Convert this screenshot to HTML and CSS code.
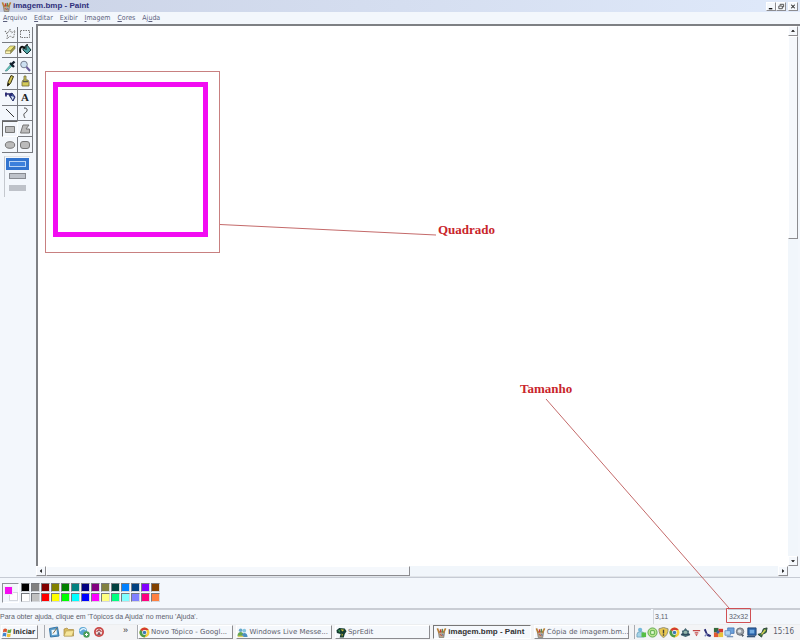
FILE: index.html
```html
<!DOCTYPE html>
<html lang="pt-BR">
<head>
<meta charset="utf-8">
<title>imagem.bmp - Paint</title>
<link rel="stylesheet" href="styles.css">
</head>
<body>
<svg class="defs" width="0" height="0" aria-hidden="true">
  <symbol id="paint" viewBox="0 0 12 12">
    <path d="M2.500 5h7l-1 6.500h-5z" fill="#b8ad96" stroke="#645c55" stroke-width=".6"/>
    <path d="M3.500 6.500L1.500 1.500M8 6.500l2.500-5" stroke="#b98035" stroke-width="1.800"/>
    <path d="M5 6V2.500" stroke="#c73d2d" stroke-width="1.800"/>
    <path d="M7 6V2" stroke="#5a8755" stroke-width="1.500"/>
    <path d="M4 8l3 1.500" stroke="#ba4136"/><path d="M7 7.500l1 2" stroke="#4d6da8"/>
  </symbol>
  <symbol id="chrome" viewBox="0 0 12 12">
    <circle cx="6" cy="6" r="5.400" fill="#f5cd3c"/>
    <path d="M6 6L1.300 3.300A5.400 5.400 0 0 1 10.700 3.300L6 3.500z" fill="#d43c30"/>
    <path d="M6 6L1.300 3.300A5.400 5.400 0 0 0 6 11.400L8 8z" fill="#4b9b4b"/>
    <circle cx="6" cy="6" r="2.600" fill="#fff"/><circle cx="6" cy="6" r="1.900" fill="#3d78b5"/>
  </symbol>
  <symbol id="people" viewBox="0 0 12 12">
    <circle cx="4" cy="3.500" r="2" fill="#66a7c9"/><path d="M.5 10c0-6 7-6 7 0z" fill="#65a651"/>
    <circle cx="8" cy="4" r="2" fill="#87c4df"/><path d="M5 11c0-6 6.500-6 6.500 0z" fill="#4b8fc0"/>
    <path d="M1 9.500h6v1.500H1z" fill="#d7cd5f"/>
  </symbol>
  <symbol id="spr" viewBox="0 0 12 12">
    <path d="M.5 3.500L3.500 1l6 .5 2 3-2 3-1 4H4l1-4-4-1z" fill="#143d31"/>
    <path d="M5 2.500l4 .5-2 2zM6 7l1.500 1-1 3" fill="#d6c13b"/><path d="M2 4l2-1 .5 3" fill="#3d9a56"/>
  </symbol>
</svg>

<header class="titlebar">
  <svg class="icon"><use href="#paint"/></svg>
  <h1>imagem.bmp - Paint</h1>
  <div class="winbtns">
    <button class="bevel" aria-label="Minimizar"><svg viewBox="0 0 9 8"><path d="M2 6.500h4" stroke="#111" stroke-width="1.500"/></svg></button>
    <button class="bevel" aria-label="Restaurar"><svg viewBox="0 0 9 8"><path d="M3.500 3V1.500h4v3H6M2 3.500h4v3H2z" fill="none" stroke="#444"/></svg></button>
    <button class="bevel last" aria-label="Fechar"><svg viewBox="0 0 9 8"><path d="M2.500 2l4 4m0-4l-4 4" stroke="#222" stroke-width="1.200"/></svg></button>
  </div>
</header>
<nav class="menu">
  <button><u>A</u>rquivo</button><button><u>E</u>ditar</button><button>E<u>x</u>ibir</button><button><u>I</u>magem</button><button><u>C</u>ores</button><button>Aj<u>u</u>da</button>
</nav>

<main class="work">
  <aside class="side">
    <div class="tools">
      <button aria-label="Seleção livre"><svg viewBox="0 0 14 14"><path d="M2 4l3 2 2-4 1.500 4L12 3.500 10.500 11 7 9l-3 3 .5-4z" fill="none" stroke="#777" stroke-dasharray="1.500 1"/></svg></button>
      <button aria-label="Selecionar"><svg viewBox="0 0 14 14"><path d="M2.500 3.500h9v7h-9z" fill="none" stroke="#777" stroke-dasharray="1.500 1"/></svg></button>
      <button aria-label="Borracha"><svg viewBox="0 0 14 14"><path d="M2.500 8L7 3h5L7.500 8z" fill="#eee77b" stroke="#888152" stroke-width=".7"/><path d="M7.500 8L12 3v2.500L7.500 10.500z" fill="#a5a047" stroke="#67643c" stroke-width=".6"/><path d="M2.500 8h5v2.500h-5z" fill="#fff7b4" stroke="#888152" stroke-width=".6"/></svg></button>
      <button aria-label="Preencher"><svg viewBox="0 0 14 14"><path d="M5 5l4-3 4 5-4 4-4-4z" fill="#4ba1a2" stroke="#173738"/><path d="M7 5.500C4 2 1 4 2.500 10" fill="none" stroke="#111" stroke-width="2"/><path d="M8 7V2l2-.5" fill="none" stroke="#222"/></svg></button>
      <button aria-label="Conta-gotas"><svg viewBox="0 0 14 14"><path d="M2 12l6-7 1.500 1.500L4 12z" fill="#5fc3bb" stroke="#4d8785" stroke-width=".6"/><path d="M7 4l4 4M8.500 5.500l3-3" stroke="#121f2d" stroke-width="2.400"/></svg></button>
      <button aria-label="Lupa"><svg viewBox="0 0 14 14"><circle cx="6" cy="5.500" r="3.300" fill="#cce0f1" stroke="#777f90"/><path d="M8.500 8l3.500 4" stroke="#675c9c" stroke-width="2"/></svg></button>
      <button aria-label="Lápis"><svg viewBox="0 0 14 14"><path d="M8 1.500l2.500 1-3 7L4.500 12l.5-4z" fill="#d3c354" stroke="#383413"/><path d="M5 9l-.5 3L7 10" fill="#111"/></svg></button>
      <button aria-label="Pincel"><svg viewBox="0 0 14 14"><path d="M6 2h2v4h2l1 2v4H4V8l1-2h1z" fill="#d4ca58" stroke="#6e693a" stroke-width=".8"/><path d="M5 7.500h5" stroke="#555" stroke-width="1.500"/></svg></button>
      <button aria-label="Spray"><svg viewBox="0 0 14 14"><path d="M6 5l3-2 3 4-2 4z" fill="#465aa8" stroke="#202862"/><path d="M2 4h6v2M3 2.500v4" fill="none" stroke="#25256f" stroke-width="1.700"/><path d="M8 6l3 1-1.500 3z" fill="#dde8f5"/></svg></button>
      <button class="letter" aria-label="Texto">A</button>
      <button aria-label="Linha"><svg viewBox="0 0 14 14"><path d="M3 3l8 8" stroke="#333"/></svg></button>
      <button aria-label="Curva"><svg viewBox="0 0 14 14"><path d="M6 2c5 0 3 4 1 5s-1 3 0 5" fill="none" stroke="#444"/></svg></button>
      <button class="on" aria-label="Retângulo"><svg viewBox="0 0 14 14"><path d="M2.500 4.500h9v6h-9z" fill="#bbb" stroke="#777"/></svg></button>
      <button aria-label="Polígono"><svg viewBox="0 0 14 14"><path d="M5 3h6L8 7h3.500v4H2.500z" fill="#bbb" stroke="#777"/></svg></button>
      <button aria-label="Elipse"><svg viewBox="0 0 14 14"><ellipse cx="7" cy="7" rx="4.700" ry="3.300" fill="#bbb" stroke="#777"/></svg></button>
      <button aria-label="Retângulo arredondado"><svg viewBox="0 0 14 14"><rect x="2.500" y="3.500" width="9" height="7" rx="2.500" fill="#bbb" stroke="#777"/></svg></button>
    </div>
    <div class="fills">
      <button class="sel" aria-label="Só contorno"><i></i></button>
      <button aria-label="Contorno e preenchimento"><i></i></button>
      <button aria-label="Só preenchimento"><i class="solid"></i></button>
    </div>
  </aside>
  <section class="view">
    <div class="canvas">
      <div class="note-frame"></div>
      <div class="square"></div>
      <p class="note quadrado">Quadrado</p>
      <p class="note tamanho">Tamanho</p>
    </div>
    <div class="vscroll">
      <button class="bevel" aria-label="Para cima"><svg viewBox="0 0 10 10"><path d="M2.500 6L5 3.500 7.500 6z"/></svg></button>
      <div class="bevel vthumb"></div>
      <button class="bevel end" aria-label="Para baixo"><svg viewBox="0 0 10 10"><path d="M2.500 4L5 6.500 7.500 4z"/></svg></button>
    </div>
    <div class="hscroll">
      <button class="bevel" aria-label="Para a esquerda"><svg viewBox="0 0 10 10"><path d="M6 2.500L3.500 5 6 7.500z"/></svg></button>
      <div class="bevel hthumb"></div>
      <button class="bevel end" aria-label="Para a direita"><svg viewBox="0 0 10 10"><path d="M4 2.500L6.500 5 4 7.500z"/></svg></button>
    </div>
  </section>
</main>

<section class="palette">
  <div class="current"><i class="back"></i><i class="fore"></i></div>
  <div class="swatches">
    <button class="c1" aria-label="Preto"></button><button class="c2" aria-label="Cinza"></button><button class="c3" aria-label="Bordô"></button><button class="c4" aria-label="Oliva"></button><button class="c5" aria-label="Verde"></button><button class="c6" aria-label="Petróleo"></button><button class="c7" aria-label="Marinho"></button><button class="c8" aria-label="Roxo"></button><button class="c9" aria-label="Cáqui"></button><button class="c10" aria-label="Verde escuro"></button><button class="c11" aria-label="Azul claro"></button><button class="c12" aria-label="Azul escuro"></button><button class="c13" aria-label="Violeta"></button><button class="c14" aria-label="Marrom"></button>
    <button class="d1" aria-label="Branco"></button><button class="d2" aria-label="Prata"></button><button class="d3" aria-label="Vermelho"></button><button class="d4" aria-label="Amarelo"></button><button class="d5" aria-label="Limão"></button><button class="d6" aria-label="Ciano"></button><button class="d7" aria-label="Azul"></button><button class="d8" aria-label="Magenta"></button><button class="d9" aria-label="Creme"></button><button class="d10" aria-label="Verde água"></button><button class="d11" aria-label="Celeste"></button><button class="d12" aria-label="Lavanda"></button><button class="d13" aria-label="Rosa"></button><button class="d14" aria-label="Laranja"></button>
  </div>
</section>

<footer class="status">
  <span class="help">Para obter ajuda, clique em 'Tópicos da Ajuda' no menu 'Ajuda'.</span>
  <span class="pos">3,11</span>
  <span class="size">32x32</span>
</footer>

<div class="taskbar">
  <button class="bevel start"><svg class="icon" viewBox="0 0 12 12"><path d="M1.500 2.500q2-1.500 4 0L5 6Q3 4.500 1 6z" fill="#dc5631"/><path d="M6.300 2.800q2 1 4-.5L9.800 6q-2 1-4 .3z" fill="#69a844"/><path d="M1 6.800q2-1.200 3.800 0l-.5 3.700q-2-1.500-3.800 0z" fill="#4386cd"/><path d="M5.600 7.200q2 1 4 0l-.5 3.500q-2 1-4 0z" fill="#efc33c"/></svg>Iniciar</button>
  <div class="quick">
    <button aria-label="Área de trabalho"><svg viewBox="0 0 12 12"><path d="M1.500 2.500l8-1.500 1.500 9-8.500 1z" fill="#5b9fcd" stroke="#3876a7"/><path d="M3.500 4l5-.5.5 5-5 .5z" fill="#eef8ff"/><path d="M5 7.500L9 2" stroke="#846d47"/></svg></button>
    <button aria-label="Pastas"><svg viewBox="0 0 12 12"><path d="M1 3l3-1 1.500 1.500h5V10H1z" fill="#d9bb5e" stroke="#a78942" stroke-width=".7"/><path d="M3 5l8-.5L9 10H1z" fill="#f6e59a" stroke="#b69d52" stroke-width=".6"/></svg></button>
    <button aria-label="Contatos"><svg viewBox="0 0 12 12"><circle cx="5" cy="5" r="4" fill="#5da7d5"/><path d="M2 5q3-4 6-1" fill="none" stroke="#e7f6ff" stroke-width="1.300"/><circle cx="8.500" cy="8.500" r="3.200" fill="#4a9d58"/><path d="M7 8.500h3M8.500 7v3" stroke="#fff"/></svg></button>
    <button aria-label="Discador"><svg viewBox="0 0 12 12"><circle cx="6" cy="6" r="5" fill="#c94645"/><circle cx="6" cy="6" r="3.200" fill="#f3dedd"/><path d="M3 5.500L6 3l3 2.500-1 .5-2-1.500L4 6z" fill="#a83d40"/><path d="M4 9l2-3.500L8 9z" fill="#795963"/></svg></button>
  </div>
  <span class="more">»</span>
  <div class="tasks">
    <button class="bevel"><svg class="icon"><use href="#chrome"/></svg><span>Novo Tópico - Googl...</span></button>
    <button class="bevel"><svg class="icon"><use href="#people"/></svg><span>Windows Live Messe...</span></button>
    <button class="bevel"><svg class="icon"><use href="#spr"/></svg><span>SprEdit</span></button>
    <button class="bevel pressed"><svg class="icon"><use href="#paint"/></svg><span>imagem.bmp - Paint</span></button>
    <button class="bevel"><svg class="icon"><use href="#paint"/></svg><span>Cópia de imagem.bm...</span></button>
  </div>
  <div class="tray">
    <svg viewBox="0 0 12 12"><circle cx="4.500" cy="3" r="2.300" fill="#77b9da"/><path d="M1 11V8q0-3 4-3t4 3v3z" fill="#a7d4e8" stroke="#5993ae" stroke-width=".7"/><path d="M6 6h5v5H6z" fill="#57bf45"/></svg>
    <svg viewBox="0 0 12 12"><circle cx="6" cy="6" r="5" fill="#b7e58c" stroke="#5ba34d"/><path d="M4 4h4v4H4z" fill="#e7fbd3" stroke="#55a946"/></svg>
    <svg viewBox="0 0 12 12"><path d="M1 2l5-1.500L11 2q0 7-5 9.500Q1 9 1 2z" fill="#e9c850" stroke="#8f8c75"/><path d="M6 3v4M6 8v1.500" stroke="#454238" stroke-width="1.500"/></svg>
    <svg><use href="#chrome"/></svg>
    <svg viewBox="0 0 12 12"><path d="M2 4l2-.5L6 1l2 2.500 2 .5-.5 2L11 9l-3 1-2 1-2-1-3-1 1.500-3z" fill="#446772"/><circle cx="6" cy="6" r="2" fill="#94b7ac"/><path d="M1 8h10" stroke="#293f55"/></svg>
    <svg viewBox="0 0 12 12"><path d="M2 4h8M4 6.500h4" stroke="#c44545" stroke-width="1.300"/><path d="M4.500 8h3L6 10z" fill="#c44545"/></svg>
    <svg viewBox="0 0 12 12"><path d="M2 3l2-1 2 5 4 2-1 2-3-1-2-3z" fill="#292b75"/><path d="M6 7L3 10" stroke="#7c83b9" stroke-width="1.500"/></svg>
    <svg viewBox="0 0 12 12"><path d="M1 1h5v5H1z" fill="#356b3c"/><path d="M6 2h5v4H6z" fill="#d3372f"/><path d="M1 6h5v5H1z" fill="#e15932"/><path d="M6 6h5v5H6z" fill="#e6c33b"/><path d="M4 4h3v3H4z" fill="#395fae"/></svg>
    <svg viewBox="0 0 12 12"><path d="M4 1h7v6H4z" fill="#6ca2dc" stroke="#406ead" stroke-width=".8"/><path d="M1 4h6v5H1z" fill="#b0d6f3" stroke="#5481bc" stroke-width=".8"/><path d="M3 10.500h7" stroke="#7996bc" stroke-width="1.500"/></svg>
    <svg viewBox="0 0 12 12"><circle cx="5.500" cy="5" r="4" fill="#9da1a6" stroke="#666b75"/><circle cx="5" cy="4.500" r="1.800" fill="#e0e5e9"/><path d="M6 7l4 2-2 2z" fill="#555d68"/></svg>
    <svg viewBox="0 0 12 12"><path d="M2 1h9v8H2z" fill="#2d67ad" stroke="#244776"/><path d="M4 3h5v4H4z" fill="#74ace0"/><path d="M1 10.500h9" stroke="#355478" stroke-width="1.500"/></svg>
    <svg viewBox="0 0 12 12"><path d="M1 8l4-1 2-5 4-1-1 5-4 2-1 3z" fill="#448144" stroke="#243c31"/><path d="M5 8l4-5" stroke="#d5d051" stroke-width="1.500"/></svg>
    <time>15:16</time>
  </div>
</div>

<svg class="leaders" width="800" height="640" viewBox="0 0 800 640" aria-hidden="true">
  <path d="M220 224.500L436 235M546 399L729 608"/>
  <path class="box" d="M726.500 608.500h24v14h-24z"/>
</svg>
</body>
</html>
```

FILE: styles.css
```css
* { box-sizing: border-box; }
html { height: 100%; }
body {
  position: relative;
  display: flex;
  flex-direction: column;
  height: 100%;
  min-height: 400px;
  margin: 0;
  overflow: hidden;
  background: #f3f7fc;
  color: #5c606c;
  font: 7px/12px "Liberation Sans", sans-serif;
}
button {
  margin: 0;
  padding: 0;
  border: 0;
  background: none;
  color: inherit;
  font: inherit;
}
.defs { position: absolute; }
.icon { flex: none; width: 11px; height: 11px; }
.bevel {
  border: 1px solid #fff;
  border-right-color: #8c8c90;
  border-bottom-color: #8c8c90;
  background: #f5f8fc;
}

.titlebar {
  display: flex;
  flex: none;
  align-items: center;
  height: 12px;
  padding: 0 2px 0 1px;
  background: linear-gradient(90deg, #cbd3e6, #dfe9fa);
}
.titlebar h1 {
  margin: 0 auto 0 1px;
  color: #30307c;
  font: bold 8px/12px "Liberation Sans", sans-serif;
}
.winbtns { display: flex; height: 9px; }
.winbtns button { width: 10px; }
.winbtns .last { margin-left: 2px; }
.winbtns svg { display: block; width: 8px; height: 7px; }

.menu {
  display: flex;
  flex: none;
  gap: 7px;
  height: 12px;
  padding-left: 3px;
  color: #5b5f7c;
  font-family: "DejaVu Sans Condensed", sans-serif;
}
.menu u { text-underline-offset: 1px; text-decoration-thickness: 1px; }

.work { display: flex; flex: 1; min-height: 0; }
.side { flex: none; width: 36px; padding: 3px 3px 0 2px; }
.tools {
  display: grid;
  grid-template-columns: 1fr 1fr;
  grid-template-rows: repeat(8, 1fr);
  height: 126px;
}
.tools button {
  display: grid;
  place-items: center;
  border-right: 1px solid #777a80;
  border-bottom: 1px solid #777a80;
}
.tools svg { display: block; width: 14px; height: 14px; }
.tools .on { border: 1px solid #666; border-right-color: #fff; border-bottom-color: #fff; }
.tools .letter { color: #222; font: bold 11px/12px "Liberation Serif", serif; }
.fills {
  display: flex;
  flex-direction: column;
  width: 26px;
  height: 41px;
  margin: 3px 0 0 2px;
  padding-top: 1px;
  border-left: 1px solid #c4c8ce;
  border-top: 1px solid #dde1e6;
}
.fills button { display: grid; place-items: center; height: 12px; margin: 0 1px; }
.fills i { width: 17px; height: 6px; border: 1px solid #888b91; background: #bec2c9; }
.fills .solid { border-color: #bec2c9; }
.fills .sel { background: #3274cf; }
.fills .sel i { border-color: #b9d4f5; background: #3c80dc; }

.view {
  display: grid;
  flex: 1;
  grid-template-columns: 1fr 10px;
  grid-template-rows: 1fr 11px;
  min-width: 0;
  padding-right: 2px;
  border-top: 2px solid #7e8084;
}
.canvas { position: relative; border-left: 2px solid #7e8084; background: #fff; }
.note-frame {
  position: absolute;
  left: 7px;
  top: 45px;
  width: 175px;
  height: 182px;
  border: 1px solid #c88080;
}
.square {
  position: absolute;
  left: 15px;
  top: 56px;
  width: 155px;
  height: 155px;
  border: 5px solid #f20cf2;
}
.note {
  position: absolute;
  margin: 0;
  color: #c9252b;
  font: bold 13px/14px "Liberation Serif", serif;
}
.quadrado { left: 400px; top: 197px; }
.tamanho { left: 482px; top: 356px; }
.vscroll, .hscroll { display: flex; background: #f1f6fb; }
.vscroll { flex-direction: column; }
.vscroll button { height: 10px; }
.hscroll { border-bottom: 1px solid #e1e5ea; }
.hscroll button { width: 10px; }
.vscroll svg, .hscroll svg { display: block; width: 8px; height: 8px; }
.vthumb { height: 37.5%; }
.hthumb { width: 364px; }
.vscroll .end { margin-top: auto; }
.hscroll .end { margin-left: auto; }

.palette {
  display: flex;
  flex: none;
  gap: 2px;
  height: 31px;
  padding: 5px 0 0 2px;
  border-top: 1px solid #c6cbd4;
}
.current {
  position: relative;
  width: 17px;
  height: 20px;
  border: 1px solid #8c9096;
  border-right-color: #fff;
  border-bottom-color: #fff;
}
.current i { position: absolute; width: 9px; height: 9px; }
.current .back { right: 0; bottom: 1px; border: 1px solid #d4d8de; background: #fff; }
.current .fore { left: 1px; top: 2px; border: 1px solid #eef0f4; background: #f50cf0; }
.swatches {
  display: grid;
  grid-template-columns: repeat(14, 10px);
  grid-template-rows: 10px 10px;
}
.swatches button {
  width: 9px;
  height: 9px;
  border: 1px solid #777a80;
  border-right-color: #d5d8dd;
  border-bottom-color: #d5d8dd;
}
.c1 { background: #000; } .d1 { background: #fff; }
.c2 { background: #808080; } .d2 { background: #c0c0c0; }
.c3 { background: #800000; } .d3 { background: #f00; }
.c4 { background: #808000; } .d4 { background: #ff0; }
.c5 { background: #008000; } .d5 { background: #0f0; }
.c6 { background: #008080; } .d6 { background: #0ff; }
.c7 { background: #000080; } .d7 { background: #00f; }
.c8 { background: #800080; } .d8 { background: #f0f; }
.c9 { background: #808040; } .d9 { background: #ffff80; }
.c10 { background: #004040; } .d10 { background: #00ff80; }
.c11 { background: #0080ff; } .d11 { background: #80ffff; }
.c12 { background: #004080; } .d12 { background: #8080ff; }
.c13 { background: #8000ff; } .d13 { background: #ff0080; }
.c14 { background: #804000; } .d14 { background: #ff8040; }

.status {
  display: flex;
  flex: none;
  height: 17px;
  border-top: 1px solid #c9cdd4;
  border-bottom: 1px solid #eceef0;
}
.status span { padding-top: 1px; border-top: 1px solid #c9cdd4; }
.status .help { flex: 1; }
.status .pos { width: 73px; margin-left: 2px; padding-left: 1px; border-left: 1px solid #d3d7dd; }
.status .size { width: 72px; margin-left: 2px; padding-left: 1px; }

.taskbar {
  display: flex;
  flex: none;
  height: 15px;
  background: #f3f4f6;
}
.start {
  display: flex;
  align-items: center;
  width: 37px;
  height: 14px;
  margin-left: 1px;
  color: #333;
  font-family: "DejaVu Sans Condensed", sans-serif;
  font-weight: bold;
}
.quick {
  display: flex;
  align-items: center;
  gap: 3px;
  height: 13px;
  margin-left: 6px;
  padding-left: 3px;
  border-left: 1px solid #a9acb2;
}
.quick svg { display: block; width: 12px; height: 12px; }
.more { width: 32px; padding-left: 18px; color: #333; font-size: 9px; line-height: 10px; }
.tasks {
  display: flex;
  flex: 1;
  gap: 3px;
  min-width: 0;
  height: 14px;
  border-left: 1px solid #a9acb2;
  font-family: "DejaVu Sans", sans-serif;
}
.tasks button {
  display: flex;
  flex: 1;
  align-items: center;
  gap: 1px;
  min-width: 0;
  white-space: nowrap;
}
.tasks .pressed {
  padding-left: 2px;
  border-color: #777 #fff #fff #777;
  color: #333;
  font: bold 8px/12px "Liberation Sans", sans-serif;
}
.tray {
  display: flex;
  align-items: center;
  height: 14px;
  margin-left: 5px;
  padding: 0 6px 0 1px;
  border-left: 1px solid #a9acb2;
  font: 8px/12px "DejaVu Sans Condensed", sans-serif;
}
.tray svg { width: 11px; height: 11px; }
.tray time { margin-left: 5px; }

.leaders { position: absolute; left: 0; top: 0; pointer-events: none; }
.leaders path { fill: none; stroke: #c46a6a; stroke-width: 1; }
.leaders .box { stroke: #d05054; }
```
